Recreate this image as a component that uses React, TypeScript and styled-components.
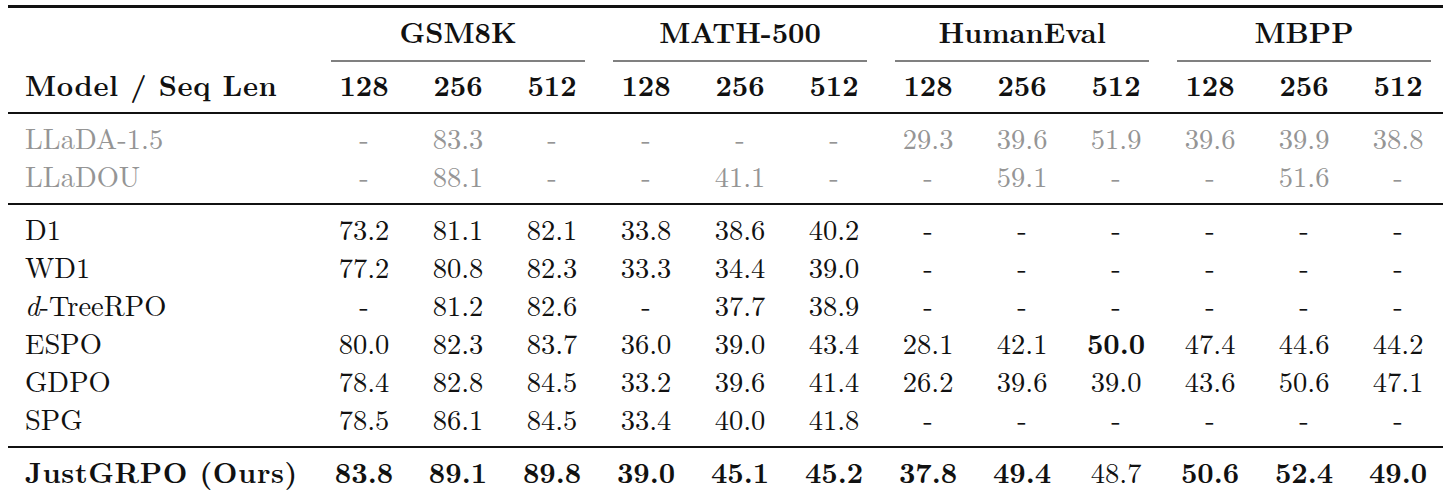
import React from 'react';
import styled, { createGlobalStyle } from 'styled-components';

type Row = {
  name: string;
  values: string[];
  bold?: boolean;
  strong?: number[];
  plain?: number[];
};

const groups = ['GSM8K', 'MATH-500', 'HumanEval', 'MBPP'];
const lengths = ['128', '256', '512'];

const reference: Row[] = [
  { name: 'LLaDA-1.5', values: ['-', '83.3', '-', '-', '-', '-', '29.3', '39.6', '51.9', '39.6', '39.9', '38.8'] },
  { name: 'LLaDOU', values: ['-', '88.1', '-', '-', '41.1', '-', '-', '59.1', '-', '-', '51.6', '-'] },
];

const baselines: Row[] = [
  { name: 'D1', values: ['73.2', '81.1', '82.1', '33.8', '38.6', '40.2', '-', '-', '-', '-', '-', '-'] },
  { name: 'WD1', values: ['77.2', '80.8', '82.3', '33.3', '34.4', '39.0', '-', '-', '-', '-', '-', '-'] },
  { name: 'd-TreeRPO', values: ['-', '81.2', '82.6', '-', '37.7', '38.9', '-', '-', '-', '-', '-', '-'] },
  {
    name: 'ESPO',
    values: ['80.0', '82.3', '83.7', '36.0', '39.0', '43.4', '28.1', '42.1', '50.0', '47.4', '44.6', '44.2'],
    strong: [8],
  },
  { name: 'GDPO', values: ['78.4', '82.8', '84.5', '33.2', '39.6', '41.4', '26.2', '39.6', '39.0', '43.6', '50.6', '47.1'] },
  { name: 'SPG', values: ['78.5', '86.1', '84.5', '33.4', '40.0', '41.8', '-', '-', '-', '-', '-', '-'] },
];

const ours: Row[] = [
  {
    name: 'JustGRPO (Ours)',
    values: ['83.8', '89.1', '89.8', '39.0', '45.1', '45.2', '37.8', '49.4', '48.7', '50.6', '52.4', '49.0'],
    bold: true,
    plain: [8],
  },
];

const sections = [
  { rows: reference, muted: true },
  { rows: baselines, muted: false },
  { rows: ours, muted: false },
];

const GlobalStyle = createGlobalStyle`
  html, body {
    margin: 0;
    padding: 0;
    background: #fff;
    overflow: hidden;
  }
`;

const Page = styled.div`
  padding: 5px 0 0 8px;
  width: 1443px;
  height: 495px;
  box-sizing: border-box;
  font-family: 'Latin Modern Roman', 'Liberation Serif', serif;
  font-size: 28.5px;
  color: #111;
`;

const Table = styled.table`
  border-collapse: separate;
  border-spacing: 0;
  table-layout: fixed;
  width: 1437px;
  border-top: 3px solid #111;
  font: inherit;
  color: inherit;
`;

const Col = styled.col<{ $width: number }>`
  width: ${p => p.$width}px;
`;

const GroupHead = styled.th`
  padding: 8px 0 0;
  font-weight: 700;
  text-align: center;
  vertical-align: top;
`;

const GroupLabel = styled.div`
  line-height: 30px;
  padding-bottom: 8px;
`;

const CMidRule = styled.div`
  margin: 6px 14px 0;
  height: 2px;
  background: #808080;
`;

const SubHead = styled.th<{ $name?: boolean }>`
  padding: 7px 0 13px ${p => (p.$name ? 17 : 0)}px;
  line-height: 30px;
  font-weight: 700;
  text-align: ${p => (p.$name ? 'left' : 'center')};
  letter-spacing: ${p => (p.$name ? '0.6px' : '0')};
  border-bottom: 2px solid #111;
  white-space: nowrap;
`;

const BodyRow = styled.tr<{ $muted: boolean }>`
  color: ${p => (p.$muted ? '#959595' : '#111')};
`;

const BodyCell = styled.td<{ $first: boolean; $rule: boolean; $bold: boolean; $name?: boolean }>`
  padding: ${p => (p.$first ? 8 : 0)}px 0 ${p => (p.$rule ? 13 : 8)}px ${p => (p.$name ? 17 : 0)}px;
  line-height: 30px;
  text-align: ${p => (p.$name ? 'left' : 'center')};
  font-weight: ${p => (p.$bold ? 700 : 400)};
  letter-spacing: ${p => (p.$bold && p.$name ? '0.6px' : '0')};
  border-bottom: ${p => (p.$rule ? '2px solid #111' : 'none')};
  white-space: nowrap;
`;

const MathVar = styled.i`
  font-style: italic;
`;

// the "d" in d-TreeRPO is set in math italic
const renderName = (name: string) =>
  name.startsWith('d-') ? (
    <>
      <MathVar>d</MathVar>
      {name.slice(1)}
    </>
  ) : (
    name
  );

const ResultsTable: React.FC = () => (
  <Table>
    <colgroup>
      <Col $width={309} />
      {groups.flatMap(g => lengths.map(l => <Col key={g + l} $width={94} />))}
    </colgroup>
    <thead>
      <tr>
        <GroupHead />
        {groups.map(g => (
          <GroupHead key={g} colSpan={3}>
            <GroupLabel>{g}</GroupLabel>
            <CMidRule />
          </GroupHead>
        ))}
      </tr>
      <tr>
        <SubHead $name>Model / Seq Len</SubHead>
        {groups.flatMap(g => lengths.map(l => <SubHead key={g + l}>{l}</SubHead>))}
      </tr>
    </thead>
    {sections.map((section, s) => (
      <tbody key={s}>
        {section.rows.map((row, r) => {
          const first = r === 0;
          const rule = r === section.rows.length - 1 && s < sections.length - 1;
          return (
            <BodyRow key={r} $muted={section.muted}>
              <BodyCell $name $first={first} $rule={rule} $bold={!!row.bold}>
                {renderName(row.name)}
              </BodyCell>
              {row.values.map((v, i) => {
                const bold = row.strong?.includes(i) || (!!row.bold && !row.plain?.includes(i));
                return (
                  <BodyCell key={i} $first={first} $rule={rule} $bold={bold}>
                    {v}
                  </BodyCell>
                );
              })}
            </BodyRow>
          );
        })}
      </tbody>
    ))}
  </Table>
);

export default function App() {
  return (
    <>
      <GlobalStyle />
      <Page>
        <ResultsTable />
      </Page>
    </>
  );
}
